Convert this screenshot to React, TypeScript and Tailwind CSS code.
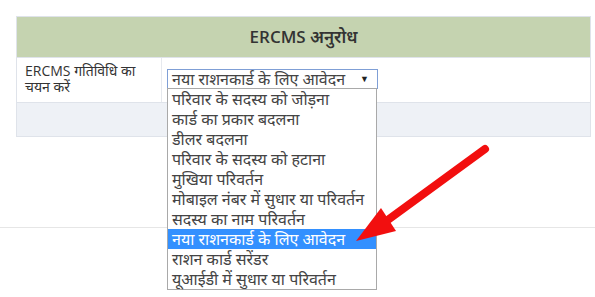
import React from "react";

const items = [
  "परिवार के सदस्य को जोड़ना",
  "कार्ड का प्रकार बदलना",
  "डीलर बदलना",
  "परिवार के सदस्य को हटाना",
  "मुखिया परिवर्तन",
  "मोबाइल नंबर में सुधार या परिवर्तन",
  "सदस्य का नाम परिवर्तन",
  "नया राशनकार्ड के लिए आवेदन",
  "राशन कार्ड सरेंडर",
  "यूआईडी में सुधार या परिवर्तन",
];

export default function App() {
  return (
    <div
      className="relative w-[595px] h-[297px] bg-white overflow-hidden text-[#333]"
      style={{ fontFamily: '"Open Sans", "Noto Sans", "Noto Sans Devanagari", sans-serif' }}
    >
      <div className="pt-[16px] pl-[16px] pr-[4px]">
        <div className="border border-[#dfe3ea]">
          <div className="h-[40px] bg-[#c5d3b0] flex items-center justify-center text-[17px] font-semibold text-[#333]">
            ERCMS अनुरोध
          </div>
          <div className="flex h-[45px] border-t border-[#dfe3ea]">
            <div className="w-[145px] border-r border-[#e6e9ee] px-[8px] pt-[5px] text-[14px] leading-[16px]">
              ERCMS गतिविधि का चयन करें
            </div>
            <div className="flex-1 pl-[5px] pt-[11px]">
              <div className="w-[211px] h-[20px] border border-[#7f9fd6] flex items-center justify-between pl-[4px] pr-[8px] text-[16px] leading-[18px] text-[#444]">
                <span>नया राशनकार्ड के लिए आवेदन</span>
                <span className="text-[9px] text-[#222]">▼</span>
              </div>
            </div>
          </div>
          <div className="h-[34px] bg-[#eef1f6] border-t border-[#dfe3ea]"></div>
        </div>
      </div>
      <div className="mt-[90px] border-t border-[#e6e6e6]"></div>

      <div className="absolute left-[167px] top-[88px] w-[210px] border border-[#a9a9a9] bg-white text-[16px]">
        {items.map((t, i) => (
          <div
            key={i}
            className={
              "h-[20px] leading-[20px] pl-[4px] whitespace-nowrap " +
              (i === 7 ? "bg-[#3390ff] text-white" : "text-[#444]")
            }
          >
            {t}
          </div>
        ))}
      </div>

      <svg className="absolute left-0 top-0" width="595" height="297" viewBox="0 0 595 297">
        <line x1="485" y1="149" x2="385" y2="222" stroke="#f20f0f" strokeWidth="8" strokeLinecap="round" />
        <polygon points="356,241 381,208 396,231" fill="#f20f0f" />
      </svg>
    </div>
  );
}
